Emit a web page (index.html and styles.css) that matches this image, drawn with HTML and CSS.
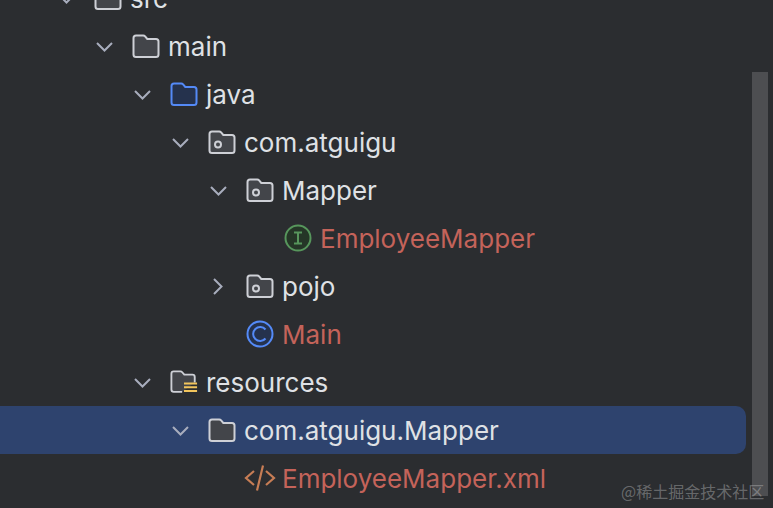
FILE: index.html
```html
<!DOCTYPE html>
<html lang="en">
<head>
    <meta charset="UTF-8">
    <title>Project tree</title>
    <link rel="stylesheet" href="styles.css">
</head>
<body>
    <svg class="defs" width="0" height="0">
        <defs>
            <path id="folder-shape" d="M4 1.500h7.200c.8 0 1.400.3 1.900.9l2.200 2.600h8.700c1.400 0 2.500 1.100 2.500 2.500v13c0 1.400-1.100 2.500-2.500 2.500H4c-1.400 0-2.500-1.100-2.500-2.500V4c0-1.400 1.100-2.500 2.500-2.500z"/>
            <path id="chevron-down" d="M7 9l7.500 7.500L22 9"/>
            <path id="chevron-right" d="M10 5l7.500 7.500L10 20"/>
        </defs>
    </svg>

    <div class="tree">
        <div class="row depth-0">
            <svg class="chevron" viewBox="0 0 28 24"><use href="#chevron-down"/></svg>
            <svg class="icon folder" viewBox="0 0 28 24"><use href="#folder-shape"/></svg>
            <span class="name">src</span>
        </div>
        <div class="row depth-1">
            <svg class="chevron" viewBox="0 0 28 24"><use href="#chevron-down"/></svg>
            <svg class="icon folder" viewBox="0 0 28 24"><use href="#folder-shape"/></svg>
            <span class="name">main</span>
        </div>
        <div class="row depth-2">
            <svg class="chevron" viewBox="0 0 28 24"><use href="#chevron-down"/></svg>
            <svg class="icon folder-blue" viewBox="0 0 28 24"><use href="#folder-shape"/></svg>
            <span class="name">java</span>
        </div>
        <div class="row depth-3">
            <svg class="chevron" viewBox="0 0 28 24"><use href="#chevron-down"/></svg>
            <svg class="icon folder" viewBox="0 0 28 24"><use href="#folder-shape"/><circle class="dot" cx="10" cy="14.500" r="3"/></svg>
            <span class="name">com.atguigu</span>
        </div>
        <div class="row depth-4">
            <svg class="chevron" viewBox="0 0 28 24"><use href="#chevron-down"/></svg>
            <svg class="icon folder" viewBox="0 0 28 24"><use href="#folder-shape"/><circle class="dot" cx="10" cy="14.500" r="3"/></svg>
            <span class="name">Mapper</span>
        </div>
        <div class="row depth-5">
            <span class="chevron"></span>
            <svg class="icon badge-green" viewBox="0 0 28 28">
                <circle cx="14" cy="14" r="12.500"/>
                <path class="glyph" d="M10 8.500h8M10 19.500h8M14 8.500v11"/>
            </svg>
            <span class="name changed">EmployeeMapper</span>
        </div>
        <div class="row depth-4">
            <svg class="chevron" viewBox="0 0 28 24"><use href="#chevron-right"/></svg>
            <svg class="icon folder" viewBox="0 0 28 24"><use href="#folder-shape"/><circle class="dot" cx="10" cy="14.500" r="3"/></svg>
            <span class="name">pojo</span>
        </div>
        <div class="row depth-4">
            <span class="chevron"></span>
            <svg class="icon badge-blue" viewBox="0 0 28 28">
                <circle cx="14" cy="14" r="12.500"/>
                <path class="glyph" d="M19.500 9.500a7 7 0 1 0 0 9"/>
            </svg>
            <span class="name changed">Main</span>
        </div>
        <div class="row depth-2">
            <svg class="chevron" viewBox="0 0 28 24"><use href="#chevron-down"/></svg>
            <svg class="icon folder" viewBox="0 0 30 26">
                <path d="M13 23.500H4c-1.400 0-2.500-1.100-2.500-2.500V4c0-1.400 1.100-2.500 2.500-2.500h7.200c.8 0 1.400.3 1.900.9l2.200 2.600h8.700c1.400 0 2.500 1.100 2.500 2.500v6"/>
                <path class="lines" d="M15 14.500h14M15 18.500h14M15 22.500h14"/>
            </svg>
            <span class="name">resources</span>
        </div>
        <div class="row depth-3 selected">
            <svg class="chevron" viewBox="0 0 28 24"><use href="#chevron-down"/></svg>
            <svg class="icon folder" viewBox="0 0 28 24"><use href="#folder-shape"/></svg>
            <span class="name">com.atguigu.Mapper</span>
        </div>
        <div class="row depth-4">
            <span class="chevron"></span>
            <svg class="icon xml" viewBox="0 0 32 28">
                <path d="M10 7l-8 7 8 7M22 7l8 7-8 7M19 1.500l-6 25"/>
            </svg>
            <span class="name changed">EmployeeMapper.xml</span>
        </div>
    </div>

    <div class="scrollbar"></div>
    <div class="watermark">@稀土掘金技术社区</div>
</body>
</html>
```

FILE: styles.css
```css
html, body {
    height: 100%;
}
body {
    margin: 0;
    overflow: hidden;
    background-color: #2b2d30;
    color: #dfe1e5;
    font-family: Inter, "Noto Sans", sans-serif;
    font-size: 26px;
}
.defs {
    display: block;
}
.tree {
    margin-top: -26px;
}
.row {
    display: flex;
    align-items: center;
    height: 48px;
    margin-right: 27px;
}
.depth-0 { padding-left: 52px; }
.depth-1 { padding-left: 90px; }
.depth-2 { padding-left: 128px; }
.depth-3 { padding-left: 166px; }
.depth-4 { padding-left: 204px; }
.depth-5 { padding-left: 242px; }
.selected {
    background-color: #2e436e;
    border-radius: 0 10px 10px 0;
}
.chevron {
    flex: none;
    width: 28px;
    height: 24px;
    margin-right: 14px;
    fill: none;
    stroke: #a8adbd;
    stroke-width: 2;
}
.icon {
    flex: none;
    width: 28px;
    margin-right: 8px;
    overflow: visible;
}
.folder use, .folder path {
    fill: #43454a;
    stroke: #ced0d6;
    stroke-width: 2;
}
.folder .lines {
    fill: none;
    stroke: #f2c55c;
    stroke-width: 2.200;
}
.folder .dot {
    fill: none;
    stroke: #ced0d6;
    stroke-width: 2;
}
.folder-blue use {
    fill: #25324d;
    stroke: #548af7;
    stroke-width: 2;
}
.badge-green circle {
    fill: #253627;
    stroke: #57965c;
    stroke-width: 2;
}
.badge-blue circle {
    fill: #25324d;
    stroke: #548af7;
    stroke-width: 2;
}
.glyph {
    fill: none;
    stroke-width: 2;
}
.badge-green .glyph {
    stroke: #57965c;
}
.badge-blue .glyph {
    stroke: #548af7;
}
.xml {
    width: 32px;
    margin-left: -2px;
    margin-right: 6px;
    fill: none;
    stroke: #c77d55;
    stroke-width: 2.200;
}
.name {
    white-space: nowrap;
}
.changed {
    color: #c4635a;
}
.scrollbar {
    position: absolute;
    top: 72px;
    left: 752px;
    width: 16px;
    height: 424px;
    background-color: #4d4e51;
}
.watermark {
    position: absolute;
    top: 481px;
    left: 621px;
    font-family: "Noto Sans CJK SC", "Noto Sans", sans-serif;
    font-size: 16px;
    line-height: 20px;
    color: rgba(200, 200, 200, 0.4);
}
```
